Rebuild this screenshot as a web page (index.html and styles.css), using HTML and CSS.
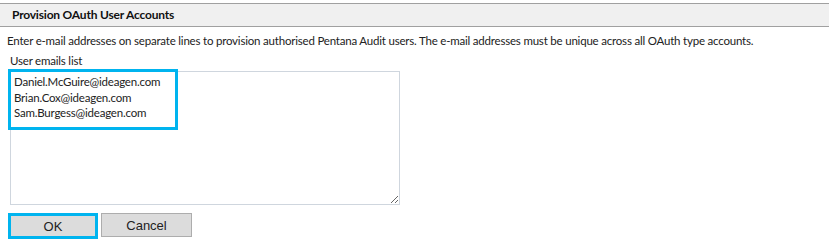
FILE: index.html
```html
<html>
  <head>
    <link rel="stylesheet" href="styles.css">
  </head>
  <body>
    <div class="Header">Provision OAuth User Accounts</div>
    <p class="Intro">Enter e-mail addresses on separate lines to provision authorised Pentana Audit users. The e-mail addresses must be unique across all OAuth type accounts.</p>
    <div class="Field">
      <label for="emails">User emails list</label>
      <div class="EmailBox">
        <textarea id="emails" name="emails">Daniel.McGuire@ideagen.com
Brian.Cox@ideagen.com
Sam.Burgess@ideagen.com</textarea>
        <div class="Mark MarkList"></div>
      </div>
    </div>
    <div class="Buttons">
      <input class="Btn BtnOk" type="button" value="OK">
      <input class="Btn" type="button" value="Cancel">
    </div>
  </body>
</html>
```
FILE: styles.css
```css
body{margin: 0; padding-top: 3px; font-family: "Segoe UI", Lato, sans-serif; font-size: 11.5px; letter-spacing: -0.2px; color: #222;}

.Header
{
    background-color: #f0f0f0;
    border-top: 1px solid #a0a0a0;
    border-bottom: 1px solid #a0a0a0;
    height: 22px;
    line-height: 22px;
    padding-left: 12px;
    font-size: 12px;
    font-weight: bold;
    letter-spacing: -0.2px;
    color: #111;
}

.Intro
{
    margin: 0;
    padding: 6px 0 0 7px;
    line-height: 16px;
    white-space: nowrap;
}

.Field
{
    padding: 4px 0 0 10px;
}

.Field label
{
    display: block;
    line-height: 16px;
}

.EmailBox
{
    position: relative;
    width: 390px;
    margin-top: 2px;
}

.EmailBox textarea
{
    display: block;
    width: 390px;
    height: 134px;
    border: 1px solid #cfd6de;
    padding: 2px 3px;
    margin: 0;
    font-family: inherit;
    font-size: 11.5px;
    letter-spacing: -0.2px;
    line-height: 15.5px;
    color: #222;
    box-sizing: border-box;
    resize: both;
    outline: none;
}

.Mark
{
    position: absolute;
    border: 3px solid #00b4ef;
}

.MarkList
{
    left: -2px;
    top: -2px;
    width: 164px;
    height: 55px;
}

.Buttons
{
    display: flex;
    gap: 3px;
    padding: 8px 0 0 8px;
}

.Btn
{
    width: 91px;
    height: 24px;
    background-color: #dcdcdc;
    border: 1px solid #adadad;
    margin: 0;
    padding: 0;
    font-family: "Liberation Sans", Arial, sans-serif;
    font-size: 13px;
    letter-spacing: 0;
    color: #222;
}

.BtnOk
{
    width: 90px;
    height: 26px;
    border: 3px solid #00b4ef;
}
```
